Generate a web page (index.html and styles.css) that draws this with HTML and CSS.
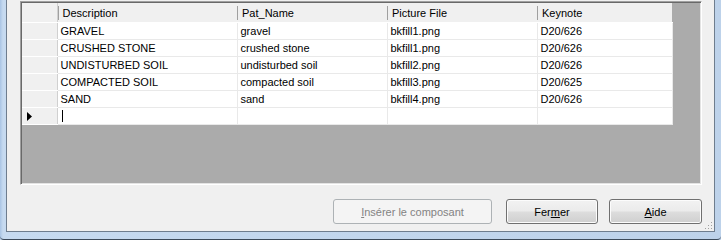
FILE: index.html
```html
<!DOCTYPE html>
<html lang="fr">
<head>
    <meta charset="UTF-8">
    <title>Composants</title>
    <link rel="stylesheet" href="styles.css">
</head>
<body>
    <div class="window">
        <div class="client">
            <!-- Data grid -->
            <div class="grid">
                <table class="grid-table">
                    <colgroup>
                        <col class="col-rowhead">
                        <col class="col-desc">
                        <col class="col-pat">
                        <col class="col-pic">
                        <col class="col-key">
                    </colgroup>
                    <thead>
                        <tr>
                            <th class="rowhead"></th>
                            <th><span>Description</span></th>
                            <th><span>Pat_Name</span></th>
                            <th><span>Picture File</span></th>
                            <th><span>Keynote</span></th>
                        </tr>
                    </thead>
                    <tbody>
                        <tr>
                            <td class="rowhead"></td>
                            <td>GRAVEL</td>
                            <td>gravel</td>
                            <td>bkfill1.png</td>
                            <td>D20/626</td>
                        </tr>
                        <tr>
                            <td class="rowhead"></td>
                            <td>CRUSHED STONE</td>
                            <td>crushed stone</td>
                            <td>bkfill1.png</td>
                            <td>D20/626</td>
                        </tr>
                        <tr>
                            <td class="rowhead"></td>
                            <td>UNDISTURBED SOIL</td>
                            <td>undisturbed soil</td>
                            <td>bkfill2.png</td>
                            <td>D20/626</td>
                        </tr>
                        <tr>
                            <td class="rowhead"></td>
                            <td>COMPACTED SOIL</td>
                            <td>compacted soil</td>
                            <td>bkfill3.png</td>
                            <td>D20/625</td>
                        </tr>
                        <tr>
                            <td class="rowhead"></td>
                            <td>SAND</td>
                            <td>sand</td>
                            <td>bkfill4.png</td>
                            <td>D20/626</td>
                        </tr>
                        <tr class="new-row">
                            <td class="rowhead">
                                <svg class="current-arrow" viewBox="0 0 5 9" width="5" height="9">
                                    <polygon points="0,0 5,4.5 0,9" fill="#000"/>
                                </svg>
                            </td>
                            <td><span class="caret"></span></td>
                            <td></td>
                            <td></td>
                            <td></td>
                        </tr>
                    </tbody>
                </table>
            </div>

            <!-- Dialog buttons -->
            <div class="buttons">
                <button class="btn btn-wide" disabled><u>I</u>nsérer le composant</button>
                <button class="btn">Fer<u>m</u>er</button>
                <button class="btn btn-last"><u>A</u>ide</button>
            </div>

            <!-- Size grip -->
            <svg class="grip" viewBox="0 0 10 10" width="10" height="10">
                <rect x="8" y="2" width="1" height="1" fill="#a0a0a0"/>
                <rect x="5" y="5" width="1" height="1" fill="#a0a0a0"/>
                <rect x="8" y="5" width="1" height="1" fill="#a0a0a0"/>
                <rect x="2" y="8" width="1" height="1" fill="#a0a0a0"/>
                <rect x="5" y="8" width="1" height="1" fill="#a0a0a0"/>
                <rect x="8" y="8" width="1" height="1" fill="#a0a0a0"/>
            </svg>
        </div>
    </div>
</body>
</html>
```

FILE: styles.css
```css
/* General Styles */
body {
    margin: 0;
    padding: 0;
    font-family: 'Liberation Sans', Arial, sans-serif;
    font-size: 11px;
    color: #000000;
    background-color: #bfd4ec;
}

/* Window frame (Win7 glass border) */
.window {
    width: 721px;
    height: 240px;
    box-sizing: border-box;
    padding: 0 6px 7px 6px;
    background: linear-gradient(to right, #a9c4e4, #c6daf0 3px, #bdd2ea);
    border-bottom: 1px solid #3c4a5a;
    border-bottom-left-radius: 4px;
    border-bottom-right-radius: 4px;
}

.client {
    position: relative;
    height: 232px;
    box-sizing: border-box;
    padding: 1px 12px 0 13px;
    background-color: #f0f0f0;
    border: 1px solid #6e7d8e;
    border-top: none;
    display: flex;
    flex-direction: column;
}

/* Grid */
.grid {
    height: 184px;
    box-sizing: border-box;
    background-color: #ababab;
    border-top: 1px solid #a0a0a0;
    border-left: 1px solid #a0a0a0;
    border-right: 1px solid #ffffff;
    border-bottom: 1px solid #ffffff;
    box-shadow: inset 1px 1px 0 #696969, inset -1px -1px 0 #e3e3e3;
    padding: 1px 0 0 1px;
}

.grid-table {
    border-collapse: collapse;
    table-layout: fixed;
    width: 650px;
}

.col-rowhead { width: 35px; }
.col-desc { width: 180px; }
.col-pat { width: 150px; }
.col-pic { width: 150px; }
.col-key { width: 135px; }

.grid-table th {
    height: 19px;
    padding: 0;
    background-color: #f0f0f0;
    border-bottom: 1px solid #ffffff;
    font-weight: normal;
    text-align: left;
}

.grid-table th span {
    display: block;
    padding-left: 4px;
    border-left: 1px solid #a0a0a0;
    line-height: 14px;
}

.grid-table th.rowhead {
    border-right: 1px solid #d0d0d0;
}

.grid-table td {
    height: 16px;
    padding: 0 0 0 3px;
    background-color: #ffffff;
    border-bottom: 1px solid #e9e9e9;
    border-right: 1px solid #e9e9e9;
    white-space: nowrap;
    overflow: hidden;
    line-height: 16px;
}

.grid-table td.rowhead {
    padding: 0;
    background-color: #f0f0f0;
    border-bottom: 1px solid #ffffff;
    border-right: 1px solid #d0d0d0;
}

.current-arrow {
    display: block;
    margin-left: 5px;
}

.caret {
    display: inline-block;
    width: 1px;
    height: 12px;
    margin-left: 1px;
    vertical-align: -2px;
    background-color: #000000;
}

/* Buttons */
.buttons {
    display: flex;
    justify-content: flex-end;
    gap: 14px;
    margin-top: 14px;
}

.btn {
    width: 92px;
    height: 25px;
    padding: 0;
    font-family: 'Liberation Sans', Arial, sans-serif;
    font-size: 11px;
    color: #000000;
    border: 1px solid #707070;
    border-radius: 3px;
    background: linear-gradient(to bottom, #f2f2f2 0%, #ebebeb 48%, #dddddd 52%, #cfcfcf 100%);
    box-shadow: inset 0 0 0 1px #fcfcfc;
}

.btn-wide {
    width: 159px;
}

.btn-last {
    width: 93px;
    margin-left: -3px;
}

.btn:disabled {
    color: #838383;
    border-color: #adb2b5;
    background: #f4f4f4;
    box-shadow: none;
}

.grip {
    position: absolute;
    right: 1px;
    bottom: 1px;
}
```
